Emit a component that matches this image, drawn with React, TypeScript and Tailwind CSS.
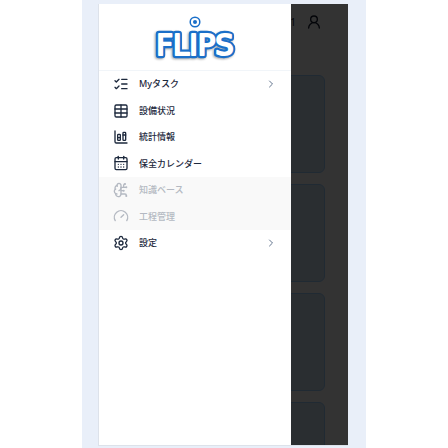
import type { ReactNode } from "react";
import {
  BrainCircuit,
  CalendarDays,
  ChartColumnStacked,
  ChevronRight,
  Gauge,
  ListChecks,
  Settings,
  Table,
  UserRound,
  type LucideIcon,
} from "lucide-react";

type MenuItem = {
  label: string;
  icon: LucideIcon;
  disabled?: boolean;
  expandable?: boolean;
};

const menu: MenuItem[] = [
  { label: "Myタスク", icon: ListChecks, expandable: true },
  { label: "設備状況", icon: Table },
  { label: "統計情報", icon: ChartColumnStacked },
  { label: "保全カレンダー", icon: CalendarDays },
  { label: "知識ベース", icon: BrainCircuit, disabled: true },
  { label: "工程管理", icon: Gauge, disabled: true },
  { label: "設定", icon: Settings, expandable: true },
];

export default function App() {
  return (
    <div className="flex h-screen justify-center bg-white font-['Noto_Sans','Noto_Sans_CJK_JP',sans-serif]">
      <div className="flex w-full max-w-[284px] bg-[#e9eff9] pt-1 pr-[18px] pb-0.5 pl-4">
        <div className="relative flex-1 overflow-hidden border-b border-l border-[#dde2ea] bg-white">
          <Dashboard />
          <div className="absolute inset-0 bg-black/80" />
          <Drawer />
        </div>
      </div>
    </div>
  );
}

/** Page that sits behind the dimmed backdrop. */
function Dashboard() {
  return (
    <div className="pr-[23px] pl-5">
      <header className="flex h-9 items-center justify-end gap-2.5 pr-[3px] text-slate-900">
        <span className="text-[10px]">1</span>
        <UserRound className="h-4 w-4" aria-hidden="true" />
      </header>
      <main className="flex flex-col gap-[11px] pt-[35px]">
        <Card />
        <Card />
        <Card />
        <Card />
      </main>
    </div>
  );
}

function Card() {
  return <section className="h-[98px] shrink-0 rounded-md border border-[#a0d0ff] bg-[#d2e6f5]" />;
}

function Drawer() {
  return (
    <aside className="absolute inset-y-0 left-0 w-[77%] bg-white">
      <div className="flex h-[67px] justify-center border-b border-slate-100 pt-2">
        <Logo />
      </div>
      <nav>
        <ul className="grid h-[185px] auto-rows-fr">
          {menu.map((item) => (
            <MenuRow key={item.label} item={item} />
          ))}
        </ul>
      </nav>
    </aside>
  );
}

function MenuRow({ item }: { item: MenuItem }) {
  const Icon = item.icon;
  const content: ReactNode = (
    <>
      <Icon className="h-4 w-4 shrink-0" strokeWidth={2} aria-hidden="true" />
      <span className="flex-1 text-left">{item.label}</span>
      {item.expandable ? <ChevronRight className="h-3 w-3 text-slate-500" aria-hidden="true" /> : null}
    </>
  );

  return (
    <li>
      <button
        type="button"
        disabled={item.disabled}
        className="flex h-full w-full items-center gap-2.5 px-3.5 text-[9px] font-medium text-slate-800 disabled:bg-[#f9f9f9] disabled:text-[#b4b9c2]"
      >
        {content}
      </button>
    </li>
  );
}

function Logo() {
  const word = {
    x: 42,
    y: 43,
    textAnchor: "middle" as const,
    strokeLinejoin: "round" as const,
    className: "font-['DejaVu_Sans',sans-serif] text-[29px]",
  };

  return (
    <svg viewBox="0 0 84 52" className="h-[52px] w-[84px] overflow-visible" role="img" aria-label="FLIPS">
      <circle cx="42" cy="10" r="4.8" fill="#fff" stroke="#1a6fc9" strokeWidth="1.5" />
      <circle cx="42" cy="10" r="2" fill="#1a6fc9" />
      <g style={{ filter: "drop-shadow(-1px 1px 1px rgb(0 0 0 / 0.35))" }}>
        <text {...word} fill="#1a6fc9" stroke="#1a6fc9" strokeWidth="6.5">
          FLIPS
        </text>
      </g>
      <text {...word} fill="#fff" stroke="#fff" strokeWidth="2" aria-hidden="true">
        FLIPS
      </text>
    </svg>
  );
}
